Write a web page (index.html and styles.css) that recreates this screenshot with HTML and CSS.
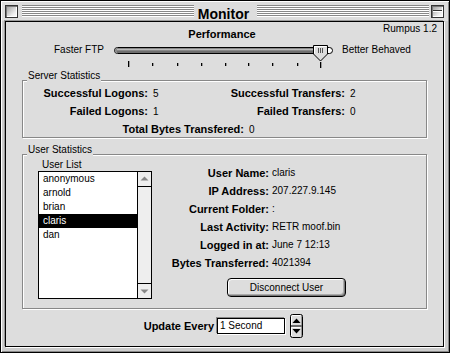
FILE: index.html
```html
<!DOCTYPE html>
<html lang="en">
<head>
    <meta charset="UTF-8">
    <title>Monitor</title>
    <link rel="stylesheet" href="styles.css">
</head>
<body>
    <div class="window">
        <div class="titlebar">
            <span class="closebox"></span>
            <span class="stripes"></span>
            <span class="title">Monitor</span>
            <span class="stripes"></span>
            <span class="shadebox"></span>
        </div>

        <div class="content">
            <div class="head">
                <div class="perf">Performance</div>
                <div class="version">Rumpus 1.2</div>
            </div>

            <div class="slider-row">
                <div class="slider-min">Faster FTP</div>
                <svg class="slider" width="222" height="26" viewBox="0 0 222 26">
                    <rect x="1.5" y="5.5" width="218" height="6" rx="3" fill="#fff" stroke="#000"/>
                    <rect x="2" y="6" width="200" height="5" rx="2.5" fill="#888"/>
                    <line x1="4" y1="7.5" x2="200" y2="7.5" stroke="#bbb"/>
                    <line x1="4" y1="10" x2="200" y2="10" stroke="#555"/>
                    <path d="M200.5 3.5 H214.5 V12 L207.5 19 L200.5 12 Z" fill="#ddd" stroke="#000"/>
                    <path d="M201.5 11.5 V4.5 H213.5" fill="none" stroke="#fff"/>
                    <line x1="205.5" y1="6" x2="205.5" y2="11" stroke="#555"/>
                    <line x1="207.5" y1="6" x2="207.5" y2="11" stroke="#555"/>
                    <line x1="209.5" y1="6" x2="209.5" y2="11" stroke="#555"/>
                    <g fill="#000">
                        <rect x="15" y="19" width="1" height="6"/>
                        <rect x="39" y="21" width="1" height="3"/>
                        <rect x="64" y="21" width="1" height="3"/>
                        <rect x="88" y="21" width="1" height="3"/>
                        <rect x="112" y="21" width="1" height="3"/>
                        <rect x="135" y="21" width="1" height="3"/>
                        <rect x="159" y="21" width="1" height="3"/>
                        <rect x="184" y="21" width="1" height="3"/>
                        <rect x="207" y="20" width="1" height="6"/>
                    </g>
                    <g fill="#999">
                        <rect x="16" y="19" width="1" height="6"/>
                        <rect x="40" y="21" width="1" height="3"/>
                        <rect x="65" y="21" width="1" height="3"/>
                        <rect x="89" y="21" width="1" height="3"/>
                        <rect x="113" y="21" width="1" height="3"/>
                        <rect x="136" y="21" width="1" height="3"/>
                        <rect x="160" y="21" width="1" height="3"/>
                        <rect x="185" y="21" width="1" height="3"/>
                        <rect x="208" y="20" width="1" height="6"/>
                    </g>
                </svg>
                <div class="slider-max">Better Behaved</div>
            </div>

            <div class="group server">
                <span class="group-title">Server Statistics</span>
                <div class="stats">
                    <span class="label">Successful Logons:</span>
                    <span class="value">5</span>
                    <span class="label">Successful Transfers:</span>
                    <span class="value">2</span>

                    <span class="label">Failed Logons:</span>
                    <span class="value">1</span>
                    <span class="label">Failed Transfers:</span>
                    <span class="value">0</span>

                    <div class="total">
                        <span class="label total-label">Total Bytes Transfered:</span>
                        <span class="value">0</span>
                    </div>
                </div>
            </div>

            <div class="group users">
                <span class="group-title">User Statistics</span>

                <div class="userlist-col">
                    <div class="list-title">User List</div>
                    <div class="list">
                        <ul class="list-items">
                            <li>anonymous</li>
                            <li>arnold</li>
                            <li>brian</li>
                            <li class="selected">claris</li>
                            <li>dan</li>
                        </ul>
                        <div class="scrollbar">
                            <div class="sb-arrow sb-up">
                                <svg width="13" height="14" viewBox="0 0 13 14"><path d="M2.5 8.5 H10.5 L6.5 4.5 Z" fill="#888"/></svg>
                            </div>
                            <div class="sb-track"></div>
                            <div class="sb-arrow sb-down">
                                <svg width="13" height="14" viewBox="0 0 13 14"><path d="M2.5 5.5 H10.5 L6.5 9.5 Z" fill="#888"/></svg>
                            </div>
                        </div>
                    </div>
                </div>

                <div class="userinfo">
                    <div class="info">
                        <span class="label">User Name:</span>
                        <span class="value">claris</span>
                        <span class="label">IP Address:</span>
                        <span class="value">207.227.9.145</span>
                        <span class="label">Current Folder:</span>
                        <span class="value">:</span>
                        <span class="label">Last Activity:</span>
                        <span class="value">RETR moof.bin</span>
                        <span class="label">Logged in at:</span>
                        <span class="value">June 7 12:13</span>
                        <span class="label">Bytes Transferred:</span>
                        <span class="value">4021394</span>
                    </div>
                    <button class="btn">Disconnect User</button>
                </div>
            </div>

            <div class="update-row">
                <span class="label update-label">Update Every</span>
                <div class="field">1 Second</div>
                <svg class="stepper" width="13" height="24" viewBox="0 0 13 24">
                    <rect x="0.5" y="0.5" width="12" height="23" rx="2" fill="#ddd" stroke="#000"/>
                    <path d="M1.5 11 V2.5 Q1.5 1.5 2.5 1.5 H10.5" fill="none" stroke="#fff"/>
                    <path d="M1.5 22 V13.5 H10.5" fill="none" stroke="#fff"/>
                    <line x1="11.5" y1="2" x2="11.5" y2="11" stroke="#999"/>
                    <line x1="11.5" y1="13" x2="11.5" y2="22" stroke="#999"/>
                    <line x1="1" y1="12" x2="12" y2="12" stroke="#000"/>
                    <path d="M2.5 9 H10.5 L6.5 4.5 Z" fill="#000"/>
                    <path d="M2.5 15 H10.5 L6.5 19.5 Z" fill="#000"/>
                </svg>
            </div>
        </div>
    </div>
</body>
</html>
```

FILE: styles.css
```css
* {
    box-sizing: border-box;
}
body {
    margin: 0;
    background: #fff;
    font-family: "Liberation Sans", Arial, sans-serif;
    font-size: 10px;
    color: #000;
}
.window {
    width: 450px;
    height: 353px;
    border: 1px solid #000;
    background: #ccc;
    display: flex;
    flex-direction: column;
    box-shadow: inset 1px 1px 0 #fff, inset -1px -1px 0 #888;
}

/* title bar */
.titlebar {
    height: 20px;
    flex-shrink: 0;
    display: flex;
    align-items: flex-start;
    padding: 3px 4px 0 3px;
    background: #ddd;
    border-top: 1px solid #fff;
    margin: 0 1px;
}
.closebox, .shadebox {
    width: 13px;
    height: 13px;
    border: 1px solid #333;
    background: linear-gradient(135deg, #999 0%, #eee 70%, #fff 100%);
    box-shadow: inset 1px 1px 0 #777, inset -1px -1px 0 #fff;
    position: relative;
}
.shadebox {
    margin-left: 2px;
}
.shadebox::after {
    content: "";
    position: absolute;
    left: 1px;
    right: 1px;
    top: 4px;
    height: 1px;
    background: #333;
    box-shadow: 0 1px 0 #fff;
}
.stripes {
    flex: 1;
    height: 12px;
    margin-left: 4px;
    background: repeating-linear-gradient(to bottom, #888 0, #888 1px, #fff 1px, #fff 2px);
}
.title {
    padding: 0 4px;
    font-size: 14px;
    font-weight: bold;
    line-height: 16px;
    margin-top: 1px;
}

/* content area */
.content {
    flex: 1;
    margin: 0 5px 5px 4px;
    border: 1px solid #000;
    background: #ddd;
    box-shadow: -1px -1px 0 #999, 1px 1px 0 #fff;
}
.head {
    display: grid;
    grid-template-columns: 1fr auto 1fr;
    height: 20px;
}
.perf {
    grid-column: 2;
    font-size: 11px;
    font-weight: bold;
    line-height: 13px;
    margin-top: 6px;
    margin-right: 5px;
}
.version {
    grid-column: 3;
    text-align: right;
    line-height: 12px;
    margin-top: 1px;
    padding-right: 6px;
}

.slider-row {
    display: flex;
    height: 26px;
}
.slider-min {
    width: 98px;
    text-align: right;
    line-height: 12px;
    margin-top: 2px;
}
.slider {
    margin-left: 9px;
}
.slider-max {
    margin-left: 7px;
    line-height: 12px;
    margin-top: 2px;
}

/* group boxes */
.group {
    position: relative;
    margin: 0 16px;
    border: 1px solid #888;
    box-shadow: inset 1px 1px 0 #fff, 1px 1px 0 #fff;
}
.group-title {
    position: absolute;
    left: 4px;
    top: -11px;
    padding: 0 1px;
    background: #ddd;
    line-height: 12px;
}
.label {
    font-size: 11px;
    font-weight: bold;
    text-align: right;
}
.value {
    padding-left: 5px;
}

.server {
    margin-top: 12px;
    height: 58px;
    padding-top: 6px;
}
.stats {
    display: grid;
    grid-template-columns: 125px 70px 127px auto;
    grid-auto-rows: 13px;
    row-gap: 5px;
    line-height: 13px;
}
.total {
    grid-column: 1 / -1;
    display: flex;
}
.total-label {
    width: 221px;
}

.users {
    margin-top: 16px;
    height: 155px;
    display: flex;
}
.userlist-col {
    margin-left: 15px;
    padding-top: 4px;
}
.list-title {
    margin-left: 4px;
    line-height: 12px;
}
.list {
    width: 114px;
    height: 128px;
    border: 1px solid #000;
    background: #fff;
    display: flex;
}
.list-items {
    flex: 1;
    margin: 0;
    padding: 0;
    list-style: none;
}
.list-items li {
    height: 14px;
    line-height: 14px;
    padding-left: 4px;
}
.list-items li.selected {
    background: #000;
    color: #fff;
}
.scrollbar {
    width: 14px;
    border-left: 1px solid #000;
    background: #eee;
    display: flex;
    flex-direction: column;
}
.sb-arrow {
    height: 15px;
}
.sb-arrow svg {
    display: block;
}
.sb-up {
    border-bottom: 1px solid #000;
}
.sb-down {
    border-top: 1px solid #000;
}
.sb-track {
    flex: 1;
}

.userinfo {
    padding-top: 9px;
}
.info {
    display: grid;
    grid-template-columns: 117px auto;
    grid-auto-rows: 18px;
    line-height: 18px;
}
.info .value {
    padding-left: 3px;
}
.btn {
    display: block;
    margin: 6px 0 0 75px;
    width: 119px;
    height: 19px;
    padding: 0;
    font-family: "Liberation Sans", Arial, sans-serif;
    font-size: 10px;
    color: #000;
    background: #ddd;
    border: 1px solid #000;
    border-radius: 4px;
    box-shadow: inset 1px 1px 0 #fff, inset -1px -1px 0 #777, inset -2px -2px 0 #aaa;
}

.update-row {
    display: flex;
    align-items: center;
    height: 24px;
    margin-top: 5px;
}
.update-label {
    width: 208px;
    line-height: 13px;
}
.field {
    margin-left: 3px;
    width: 68px;
    height: 16px;
    border: 1px solid #000;
    background: #fff;
    line-height: 14px;
    padding-left: 2px;
    box-shadow: -1px -1px 0 #888, 1px 1px 0 #fff;
}
.stepper {
    margin-left: 5px;
    display: block;
}
```
